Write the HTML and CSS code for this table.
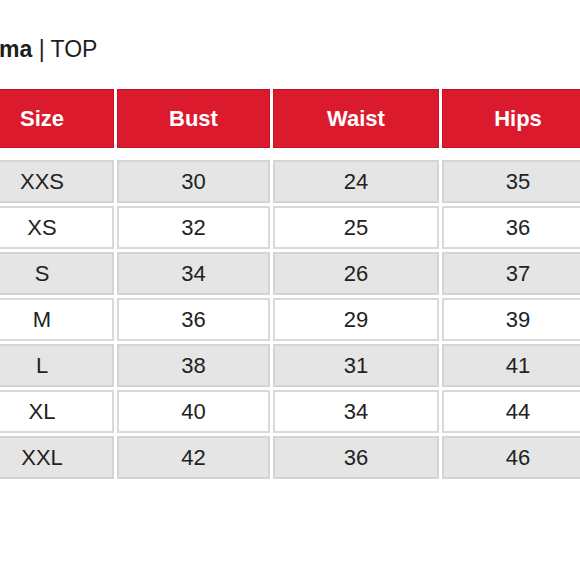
FILE: index.html
```html
<!DOCTYPE html>
<html lang="en">
<head>
<meta charset="utf-8">
<title>Size chart</title>
<link rel="stylesheet" href="styles.css">
</head>
<body>
<div class="page">
  <div class="title"><b>ma</b> | TOP</div>
  <div class="chart">
    <div class="row head">
      <div class="cell">Size</div>
      <div class="cell">Bust</div>
      <div class="cell">Waist</div>
      <div class="cell">Hips</div>
    </div>
    <div class="body">
      <div class="row gray"><div class="cell">XXS</div><div class="cell">30</div><div class="cell">24</div><div class="cell">35</div></div>
      <div class="row white"><div class="cell">XS</div><div class="cell">32</div><div class="cell">25</div><div class="cell">36</div></div>
      <div class="row gray"><div class="cell">S</div><div class="cell">34</div><div class="cell">26</div><div class="cell">37</div></div>
      <div class="row white"><div class="cell">M</div><div class="cell">36</div><div class="cell">29</div><div class="cell">39</div></div>
      <div class="row gray"><div class="cell">L</div><div class="cell">38</div><div class="cell">31</div><div class="cell">41</div></div>
      <div class="row white"><div class="cell">XL</div><div class="cell">40</div><div class="cell">34</div><div class="cell">44</div></div>
      <div class="row gray"><div class="cell">XXL</div><div class="cell">42</div><div class="cell">36</div><div class="cell">46</div></div>
    </div>
  </div>
</div>
</body>
</html>
```
FILE: styles.css
```css
html, body {
  margin: 0;
  padding: 0;
  background: #fff;
  overflow: hidden;
}
.page {
  width: 580px;
  height: 580px;
  overflow: hidden;
  font-family: "Liberation Sans", Arial, sans-serif;
  color: #222;
}
.title {
  font-size: 23px;
  line-height: 26px;
  padding-top: 36px;
  height: 26px;
  margin-left: -1px;
  color: #1e1e1e;
  white-space: nowrap;
}
.title b {
  font-weight: bold;
}
.chart {
  margin-top: 27px;
  margin-left: -30px;
  width: 630px;
}
.row {
  display: grid;
  grid-template-columns: 144px 153px 166px 152px;
  column-gap: 3px;
}
.cell {
  box-sizing: border-box;
  display: flex;
  align-items: center;
  justify-content: center;
  font-size: 22px;
}
.head .cell {
  height: 59px;
  background: #dc1a2e;
  border: 1px solid #c01426;
  color: #fff;
  font-weight: bold;
  padding-top: 1px;
}
.body {
  margin-top: 12px;
  display: flex;
  flex-direction: column;
  gap: 3px;
}
.body .cell {
  height: 43px;
  border: 2px solid #d9d9d9;
  padding-top: 1px;
}
.gray .cell {
  background: #e5e5e5;
  border-color: #d4d4d4;
}
.white .cell {
  background: #fff;
}
```
